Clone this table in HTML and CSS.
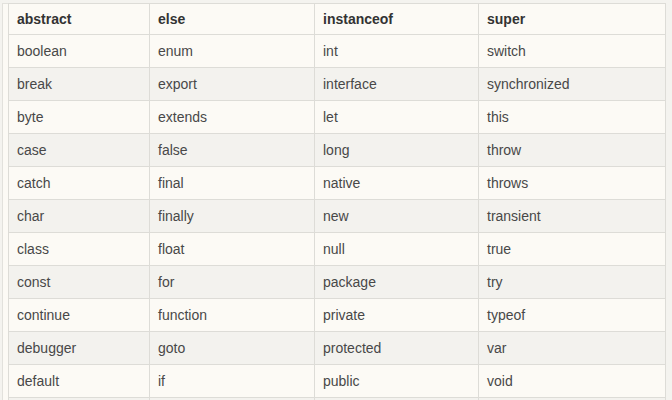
FILE: index.html
```html
<!DOCTYPE html>
<html>
<head>
<meta charset="utf-8">
<link rel="stylesheet" href="styles.css">
</head>
<body>
<div class="frame">
<table class="kw">
<colgroup><col class="c1"><col class="c2"><col class="c3"><col class="c4"></colgroup>
<thead>
<tr><th>abstract</th><th>else</th><th>instanceof</th><th>super</th></tr>
</thead>
<tbody>
<tr><td>boolean</td><td>enum</td><td>int</td><td>switch</td></tr>
<tr><td>break</td><td>export</td><td>interface</td><td>synchronized</td></tr>
<tr><td>byte</td><td>extends</td><td>let</td><td>this</td></tr>
<tr><td>case</td><td>false</td><td>long</td><td>throw</td></tr>
<tr><td>catch</td><td>final</td><td>native</td><td>throws</td></tr>
<tr><td>char</td><td>finally</td><td>new</td><td>transient</td></tr>
<tr><td>class</td><td>float</td><td>null</td><td>true</td></tr>
<tr><td>const</td><td>for</td><td>package</td><td>try</td></tr>
<tr><td>continue</td><td>function</td><td>private</td><td>typeof</td></tr>
<tr><td>debugger</td><td>goto</td><td>protected</td><td>var</td></tr>
<tr><td>default</td><td>if</td><td>public</td><td>void</td></tr>
<tr class="tail"><td></td><td></td><td></td><td></td></tr>
</tbody>
</table>
</div>
</body>
</html>
```
FILE: styles.css
```css
html, body {
  margin: 0;
  padding: 0;
  background: #f4f3ef;
  overflow: hidden;
}
.frame {
  margin: 3px 0 0 2px;
  border-left: 1px solid #e2e1dc;
  border-top: 1px solid #e2e1dc;
  background: #fcfaf5;
  padding: 0 0 0 5px;
  width: 657px;
}
.kw {
  border-collapse: collapse;
  table-layout: fixed;
  width: 657px;
  margin-top: -1px;
  font-family: "Liberation Sans", Arial, sans-serif;
  font-size: 14px;
  color: #484848;
}
.c1 { width: 141px; }
.c2 { width: 165px; }
.c3 { width: 164px; }
.c4 { width: 187px; }
.kw th, .kw td {
  border: 1px solid #dddcd7;
  text-align: left;
  padding: 8px 8px;
  line-height: 16px;
  white-space: nowrap;
}
.kw th {
  font-weight: bold;
  color: #333;
  padding: 7px 8px;
  background: #fcfaf5;
}
.kw tbody tr:nth-child(odd) td { background: #fcfaf5; }
.kw tbody tr:nth-child(even) td { background: #f3f2ee; }
.kw tr.tail td { height: 16px; }
```
